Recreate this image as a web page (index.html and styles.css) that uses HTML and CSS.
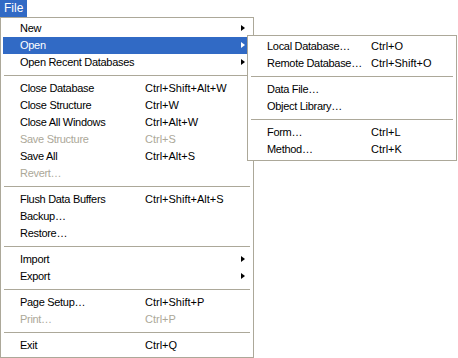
FILE: index.html
```html
<!DOCTYPE html>
<html>
<head>
<meta charset="utf-8">
<link rel="stylesheet" href="styles.css">
</head>
<body>
<div class="bar"><span class="title">File</span></div>
<div class="menu main">
  <div class="item"><span class="label">New</span><span class="key"></span><span class="arrow"></span></div>
  <div class="item active"><span class="label">Open</span><span class="key"></span><span class="arrow"></span></div>
  <div class="item"><span class="label">Open Recent Databases</span><span class="key"></span><span class="arrow"></span></div>
  <div class="sep"></div>
  <div class="item"><span class="label">Close Database</span><span class="key">Ctrl+Shift+Alt+W</span></div>
  <div class="item"><span class="label">Close Structure</span><span class="key">Ctrl+W</span></div>
  <div class="item"><span class="label">Close All Windows</span><span class="key">Ctrl+Alt+W</span></div>
  <div class="item disabled"><span class="label">Save Structure</span><span class="key">Ctrl+S</span></div>
  <div class="item"><span class="label">Save All</span><span class="key">Ctrl+Alt+S</span></div>
  <div class="item disabled"><span class="label">Revert…</span><span class="key"></span></div>
  <div class="sep"></div>
  <div class="item"><span class="label">Flush Data Buffers</span><span class="key">Ctrl+Shift+Alt+S</span></div>
  <div class="item"><span class="label">Backup…</span><span class="key"></span></div>
  <div class="item"><span class="label">Restore…</span><span class="key"></span></div>
  <div class="sep"></div>
  <div class="item"><span class="label">Import</span><span class="key"></span><span class="arrow"></span></div>
  <div class="item"><span class="label">Export</span><span class="key"></span><span class="arrow"></span></div>
  <div class="sep"></div>
  <div class="item"><span class="label">Page Setup…</span><span class="key">Ctrl+Shift+P</span></div>
  <div class="item disabled"><span class="label">Print…</span><span class="key">Ctrl+P</span></div>
  <div class="sep"></div>
  <div class="item"><span class="label">Exit</span><span class="key">Ctrl+Q</span></div>
</div>
<div class="menu sub">
  <div class="item"><span class="label">Local Database…</span><span class="key">Ctrl+O</span></div>
  <div class="item"><span class="label">Remote Database…</span><span class="key">Ctrl+Shift+O</span></div>
  <div class="sep"></div>
  <div class="item"><span class="label">Data File…</span><span class="key"></span></div>
  <div class="item"><span class="label">Object Library…</span><span class="key"></span></div>
  <div class="sep"></div>
  <div class="item"><span class="label">Form…</span><span class="key">Ctrl+L</span></div>
  <div class="item"><span class="label">Method…</span><span class="key">Ctrl+K</span></div>
</div>
</body>
</html>
```
FILE: styles.css
```css
html, body {
  margin: 0;
  padding: 0;
  background: #ffffff;
}
body {
  width: 458px;
  height: 358px;
  position: relative;
  overflow: hidden;
  font-family: "Liberation Sans", Arial, sans-serif;
  font-size: 11px;
  letter-spacing: -0.3px;
  color: #000000;
}
.bar {
  height: 17px;
  display: flex;
}
.title {
  background: #316ac5;
  color: #ffffff;
  width: 27px;
  height: 17px;
  line-height: 17px;
  padding-left: 4px;
  box-sizing: border-box;
  font-size: 12px;
  letter-spacing: 0;
}
.menu {
  background: #ffffff;
  border: 1px solid #aca899;
  padding: 2px 2px 3px 2px;
}
.main {
  width: 254px;
  box-sizing: border-box;
}
.sub {
  position: absolute;
  left: 247px;
  top: 35px;
  width: 210px;
  box-sizing: border-box;
  padding-bottom: 2px;
}
.item {
  height: 17px;
  line-height: 17px;
  display: flex;
  align-items: center;
  padding-left: 17px;
  position: relative;
  white-space: nowrap;
}
.main .label {
  width: 125px;
}
.sub .label {
  width: 104px;
}
.key {
  flex: 1;
  letter-spacing: 0;
}
.item.active {
  background: #316ac5;
  color: #ffffff;
}
.item.disabled {
  color: #aca899;
}
.arrow {
  position: absolute;
  right: 6px;
  top: 5px;
  width: 0;
  height: 0;
  border-left: 4px solid #000000;
  border-top: 3.5px solid transparent;
  border-bottom: 3.5px solid transparent;
}
.item.active .arrow {
  border-left-color: #ffffff;
}
.sep {
  height: 1px;
  background: #aca899;
  margin: 4px 1px;
}
```
